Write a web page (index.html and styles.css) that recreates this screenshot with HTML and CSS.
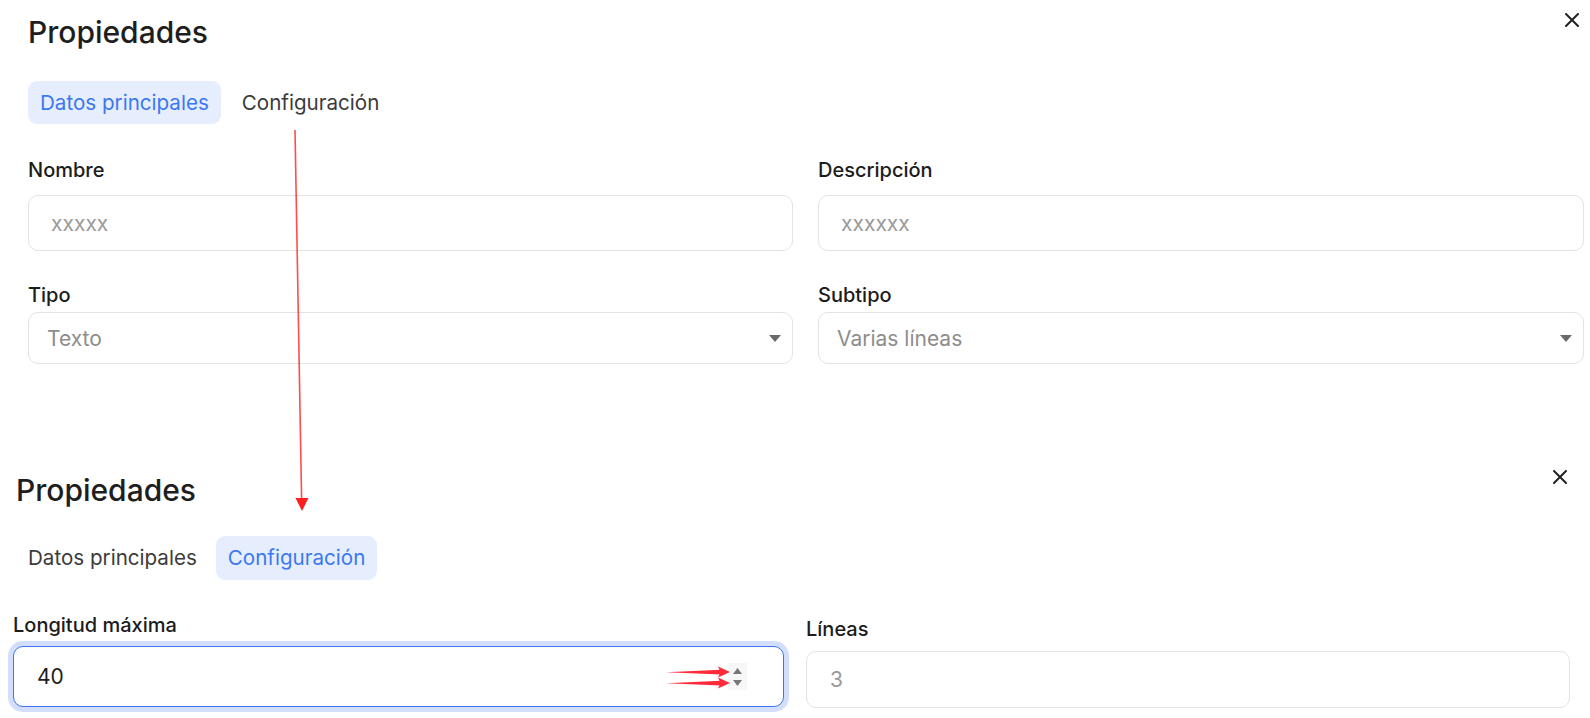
FILE: index.html
```html
<!DOCTYPE html>
<html>
<head>
  <meta charset="utf-8">
  <title>Propiedades</title>
  <link rel="stylesheet" href="styles.css">
</head>
<body>
<div class="page">

  <!-- first state: main data tab -->
  <section class="panel panel-main">
    <div class="panel-head">
      <h2 class="panel-title">Propiedades</h2>
      <button class="close-btn" type="button" aria-label="Cerrar">
        <svg width="14" height="14" viewBox="0 0 14 14"><path d="M1 1L13 13M13 1L1 13" stroke="#222" stroke-width="2" stroke-linecap="round"/></svg>
      </button>
    </div>
    <div class="tabs">
      <span class="tab active">Datos principales</span>
      <span class="tab">Configuración</span>
    </div>
    <div class="form-grid">
      <div class="field">
        <label class="field-label">Nombre</label>
        <input class="text-input" type="text" placeholder="xxxxx" readonly>
      </div>
      <div class="field">
        <label class="field-label">Descripción</label>
        <input class="text-input" type="text" placeholder="xxxxxx" readonly>
      </div>
      <div class="field">
        <label class="field-label tight">Tipo</label>
        <div class="select-box">
          <span>Texto</span>
          <svg width="12" height="7" viewBox="0 0 12 7"><path d="M0 0H12L6 7Z" fill="#6a6a6a"/></svg>
        </div>
      </div>
      <div class="field">
        <label class="field-label tight">Subtipo</label>
        <div class="select-box">
          <span>Varias líneas</span>
          <svg width="12" height="7" viewBox="0 0 12 7"><path d="M0 0H12L6 7Z" fill="#6a6a6a"/></svg>
        </div>
      </div>
    </div>
  </section>

  <!-- second state: configuration tab -->
  <section class="panel panel-alt">
    <div class="panel-head">
      <h2 class="panel-title">Propiedades</h2>
      <button class="close-btn" type="button" aria-label="Cerrar">
        <svg width="14" height="14" viewBox="0 0 14 14"><path d="M1 1L13 13M13 1L1 13" stroke="#222" stroke-width="2" stroke-linecap="round"/></svg>
      </button>
    </div>
    <div class="tabs">
      <span class="tab">Datos principales</span>
      <span class="tab active">Configuración</span>
    </div>
    <div class="form-grid config-grid">
      <div class="field">
        <label class="field-label">Longitud máxima</label>
        <div class="number-box focused">
          <span class="number-value">40</span>
          <span class="spinner">
            <svg width="9" height="6" viewBox="0 0 9 6"><path d="M0 6H9L4.5 0Z" fill="#777"/></svg>
            <svg width="9" height="6" viewBox="0 0 9 6"><path d="M0 0H9L4.5 6Z" fill="#777"/></svg>
          </span>
        </div>
      </div>
      <div class="field field-lower">
        <label class="field-label">Líneas</label>
        <div class="number-box">
          <span class="number-value muted">3</span>
        </div>
      </div>
    </div>
  </section>

  <!-- annotation arrows drawn on top -->
  <svg class="notes" width="1590" height="718" viewBox="0 0 1590 718">
    <path d="M295 130L301.6 499" stroke="#ff2e2e" stroke-width="1.6" opacity="0.85"/>
    <path d="M295.5 498L308.5 498L302 511Z" fill="#ff1f1f"/>
    <path d="M666 672.3L721 669.8L721 674.4Z" fill="#ff2a3a"/>
    <path d="M718 666.5L730 672L718 677.5L720.5 672Z" fill="#ff2a3a"/>
    <path d="M666 683.3L721 680.8L721 685.4Z" fill="#ff2a3a"/>
    <path d="M718 677.5L730 683L718 688.5L720.5 683Z" fill="#ff2a3a"/>
  </svg>
</div>
</body>
</html>
```

FILE: styles.css
```css
* {
  box-sizing: border-box;
}

html, body {
  margin: 0;
  background: #fff;
}

body {
  font-family: Inter, "Noto Sans", sans-serif;
  color: #212121;
}

.page {
  position: relative;
  width: 1590px;
  height: 718px;
  overflow: hidden;
}

.panel-head {
  display: flex;
  justify-content: space-between;
  align-items: flex-start;
}

.panel-title {
  margin: 0;
  font-size: 30px;
  line-height: 36px;
  font-weight: 500;
  color: #1e1e1e;
}

.close-btn {
  border: 0;
  padding: 0;
  background: none;
  width: 14px;
  height: 14px;
  display: block;
}

.close-btn svg {
  display: block;
}

.tabs {
  display: flex;
  gap: 9px;
}

.tab {
  font-size: 20.6px;
  padding: 0 12px;
  border-radius: 9px;
  color: #3b3b3b;
}

.tab.active {
  background: #e6eefe;
  color: #3b78f2;
}

.form-grid {
  display: grid;
}

.field {
  display: flex;
  flex-direction: column;
}

.field-label {
  font-size: 20px;
  line-height: 24px;
  font-weight: 500;
  color: #1c1c1c;
  margin-bottom: 13px;
}

.field-label.tight {
  margin-bottom: 5px;
}

.text-input,
.select-box,
.number-box {
  border: 1.5px solid #e3e3e3;
  border-radius: 10px;
  background: #fff;
  font-family: Inter, "Noto Sans", sans-serif;
  font-size: 21px;
}

.text-input {
  height: 56px;
  padding: 0 0 0 22px;
  outline: none;
  color: #333;
}

.text-input::placeholder {
  color: #9a9a9a;
}

.select-box {
  height: 52px;
  display: flex;
  align-items: center;
  justify-content: space-between;
  padding: 0 11px 0 18px;
  color: #8d8d8d;
}

/* first panel */
.panel-main {
  padding: 14px 6px 0 28px;
}

.panel-main .close-btn {
  margin: -1px 5px 0 0;
}

.panel-main .tabs {
  margin-top: 31px;
}

.panel-main .tab {
  line-height: 43px;
}

.panel-main .form-grid {
  margin-top: 34px;
  grid-template-columns: 765px 766px;
  column-gap: 25px;
  row-gap: 32px;
}

/* second panel */
.panel-alt {
  padding: 108px 20px 0 13px;
}

.panel-alt .panel-title {
  margin-left: 3px;
}

.panel-alt .close-btn {
  margin: -2px 3px 0 0;
}

.panel-alt .tabs {
  margin: 28px 0 0 3px;
  gap: 7px;
}

.panel-alt .tab {
  line-height: 44px;
}

.config-grid {
  margin-top: 33px;
  grid-template-columns: 771px 764px;
  column-gap: 22px;
  align-items: start;
}

.config-grid .field-label {
  margin-bottom: 9px;
}

.field-lower {
  margin-top: 4px;
}

.field-lower .field-label {
  margin-bottom: 10px;
}

.number-box {
  height: 57px;
  display: flex;
  align-items: center;
  padding: 0 0 0 23px;
}

.number-box.focused {
  height: 61px;
  border-color: #3c74f1;
  box-shadow: 0 0 0 5px #d2defb;
  padding-right: 36px;
}

.number-value {
  flex: 1;
  color: #1d1d1d;
}

.number-value.muted {
  color: #9a9a9a;
}

.spinner {
  width: 19px;
  height: 27px;
  background: #f7f7f7;
  display: flex;
  flex-direction: column;
  align-items: center;
  justify-content: center;
  gap: 6px;
}

.spinner svg {
  display: block;
}

.notes {
  position: absolute;
  top: 0;
  left: 0;
  pointer-events: none;
}
```
